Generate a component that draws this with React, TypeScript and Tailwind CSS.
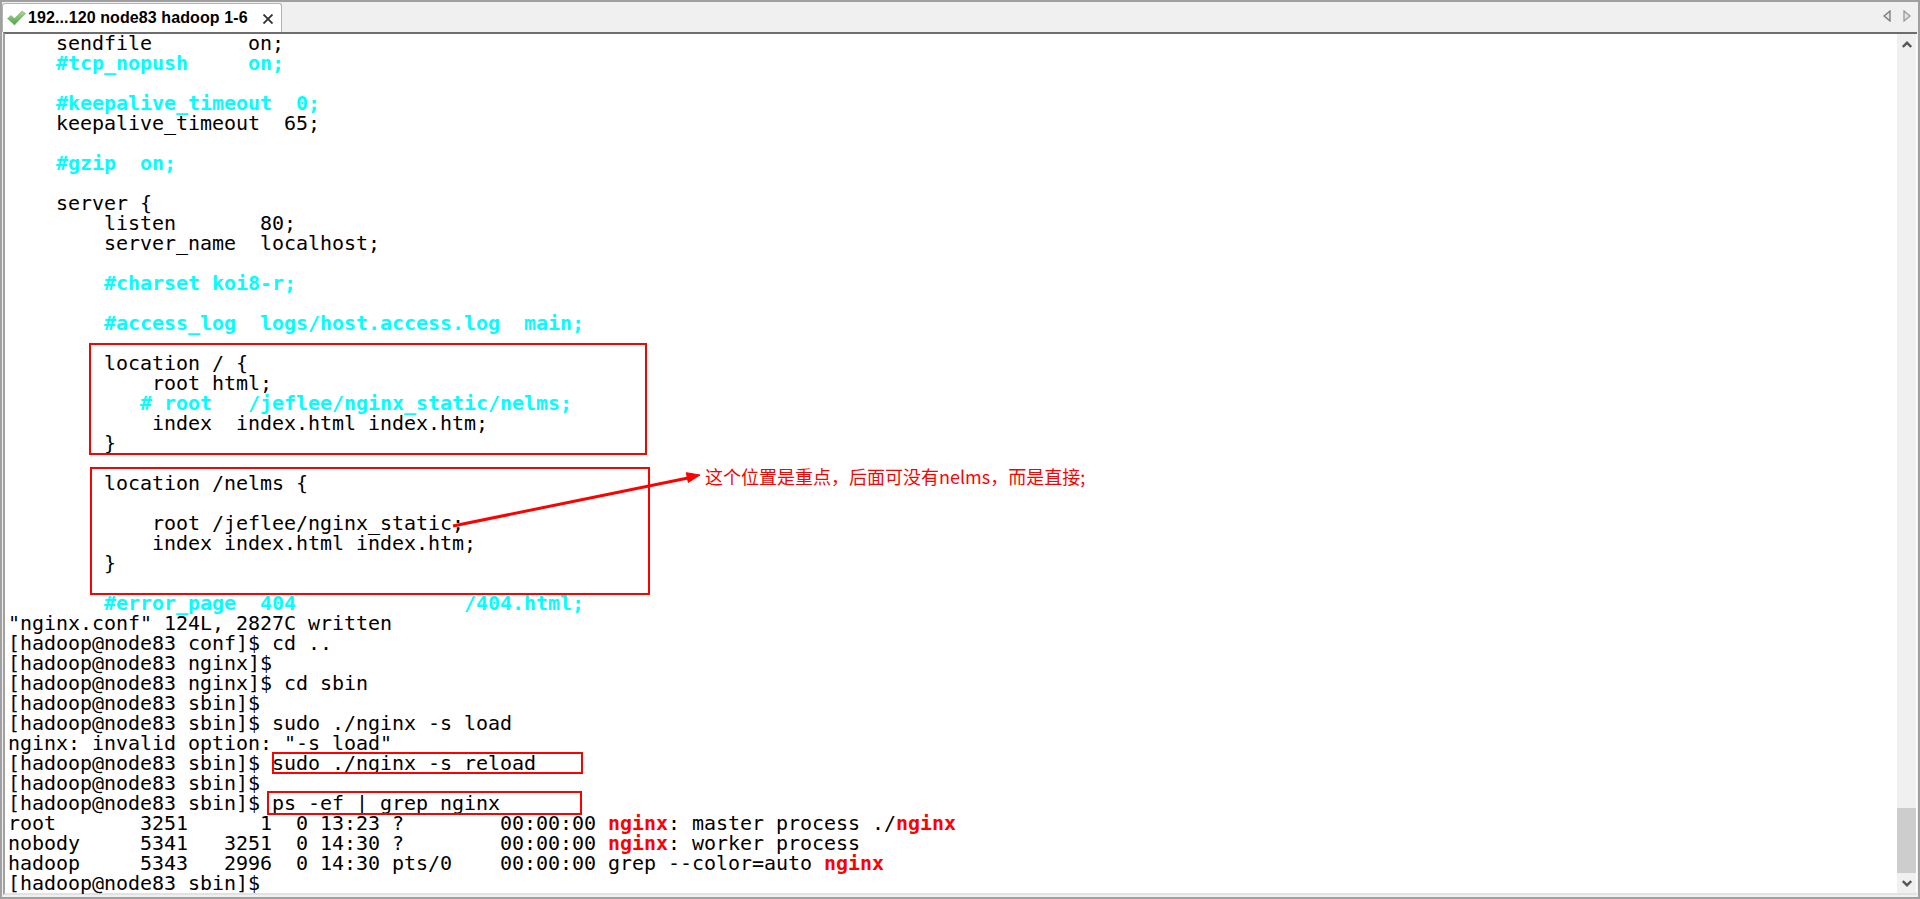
import React from 'react';

const mono = "font-['DejaVu_Sans_Mono',monospace]";

type Seg = { t: string; c?: 'cy' | 'rd' };

// one terminal row per entry, cyan = vim comment, red = grep match
const lines: (string | Seg[])[] = [
  '    sendfile        on;',
  [{ t: '    #tcp_nopush     on;', c: 'cy' }],
  '',
  [{ t: '    #keepalive_timeout  0;', c: 'cy' }],
  '    keepalive_timeout  65;',
  '',
  [{ t: '    #gzip  on;', c: 'cy' }],
  '',
  '    server {',
  '        listen       80;',
  '        server_name  localhost;',
  '',
  [{ t: '        #charset koi8-r;', c: 'cy' }],
  '',
  [{ t: '        #access_log  logs/host.access.log  main;', c: 'cy' }],
  '',
  '        location / {',
  '            root html;',
  [{ t: '           # root   /jeflee/nginx_static/nelms;', c: 'cy' }],
  '            index  index.html index.htm;',
  '        }',
  '',
  '        location /nelms {',
  '',
  '            root /jeflee/nginx_static;',
  '            index index.html index.htm;',
  '        }',
  '',
  [{ t: '        #error_page  404              /404.html;', c: 'cy' }],
  '"nginx.conf" 124L, 2827C written',
  '[hadoop@node83 conf]$ cd ..',
  '[hadoop@node83 nginx]$',
  '[hadoop@node83 nginx]$ cd sbin',
  '[hadoop@node83 sbin]$',
  '[hadoop@node83 sbin]$ sudo ./nginx -s load',
  'nginx: invalid option: "-s load"',
  '[hadoop@node83 sbin]$ sudo ./nginx -s reload',
  '[hadoop@node83 sbin]$',
  '[hadoop@node83 sbin]$ ps -ef | grep nginx',
  [
    { t: 'root       3251      1  0 13:23 ?        00:00:00 ' },
    { t: 'nginx', c: 'rd' },
    { t: ': master process ./' },
    { t: 'nginx', c: 'rd' },
  ],
  [
    { t: 'nobody     5341   3251  0 14:30 ?        00:00:00 ' },
    { t: 'nginx', c: 'rd' },
    { t: ': worker process' },
  ],
  [
    { t: 'hadoop     5343   2996  0 14:30 pts/0    00:00:00 grep --color=auto ' },
    { t: 'nginx', c: 'rd' },
  ],
  '[hadoop@node83 sbin]$',
];

const Row: React.FC<{ line: string | Seg[] }> = ({ line }) => {
  if (typeof line === 'string') return <div className="h-5">{line}</div>;
  return (
    <div className="h-5">
      {line.map((s, i) => (
        <span
          key={i}
          className={s.c === 'cy' ? 'font-bold text-[#00ffff]' : s.c === 'rd' ? 'font-bold text-[#ff0000]' : ''}
        >
          {s.t}
        </span>
      ))}
    </div>
  );
};

const Tab: React.FC = () => (
  <div className="mt-px flex h-[29px] w-[280px] items-center rounded-t-[3px] border border-b-0 border-[#b4b4b4] bg-white pl-[4px]">
    <svg width="19" height="16" viewBox="0 0 19 16">
      <defs>
        <linearGradient id="chk" x1="0" y1="0" x2="0" y2="1">
          <stop offset="0" stopColor="#a5e08a" />
          <stop offset="1" stopColor="#45a83c" />
        </linearGradient>
      </defs>
      <path d="M0.5 8.5 L4 5.5 L7.5 8.5 L15 1 L18.5 3.5 L7.5 15 Z" fill="url(#chk)" stroke="#9aa896" strokeWidth="0.7" />
    </svg>
    <span className="ml-[2px] whitespace-nowrap font-['Liberation_Sans',sans-serif] text-[16px] font-bold tracking-[0.1px] text-black">
      192...120 node83 hadoop 1-6
    </span>
    <svg className="ml-[15px] mt-px" width="10" height="10" viewBox="0 0 10 10">
      <path d="M0.5 0.5 L9.5 9.5 M9.5 0.5 L0.5 9.5" stroke="#303030" strokeWidth="1.8" />
    </svg>
  </div>
);

const RedBox: React.FC<{ cls: string }> = ({ cls }) => (
  <div className={`absolute border-2 border-[#ff0000] ${cls}`} />
);

const App: React.FC = () => {
  return (
    <div className="flex h-[899px] w-[1920px] flex-col overflow-hidden border-2 border-[#a0a0a0] bg-[#f0f0f0]">
      <div className="flex h-[30px] shrink-0 items-start justify-between">
        <Tab />
        <div className="mr-[7px] mt-[8px] flex gap-[12px]">
          <svg width="8" height="12" viewBox="0 0 8 12">
            <path d="M7 1 L1 6 L7 11 Z" fill="#e4e4e4" stroke="#7a7a7a" strokeWidth="1.3" />
          </svg>
          <svg width="8" height="12" viewBox="0 0 8 12">
            <path d="M1 1 L7 6 L1 11 Z" fill="#e4e4e4" stroke="#9a9a9a" strokeWidth="1.3" />
          </svg>
        </div>
      </div>
      <div className="mb-[2px] ml-px mr-[1px] flex min-h-0 flex-1 border-b-2 border-l-2 border-t-2 border-b-[#e2e2e2] border-l-[#a0a0a0] border-t-[#6e6e6e] bg-white">
        <div className={`relative min-w-0 flex-1 whitespace-pre pl-[3px] text-[20px] leading-5 tracking-[-0.04px] text-black ${mono}`}>
          <div className="-mt-px">
            {lines.map((l, i) => (
              <Row key={i} line={l} />
            ))}
          </div>
          <RedBox cls="left-[84px] top-[309px] h-[112px] w-[558px]" />
          <RedBox cls="left-[85px] top-[433px] h-[128px] w-[560px]" />
          <RedBox cls="left-[267px] top-[718px] h-[22px] w-[311px]" />
          <RedBox cls="left-[262px] top-[757px] h-[24px] w-[315px]" />
          <svg className="absolute left-[445px] top-[436px]" width="260" height="64" viewBox="0 0 260 64">
            <path d="M3 56 L238 8" stroke="#ff0000" strokeWidth="3" fill="none" />
            <path d="M250 5 L238.3 12.5 L236.3 2.7 Z" fill="#ff0000" stroke="#ff0000" strokeWidth="1" />
          </svg>
          <div className="absolute left-[700px] top-[430px] whitespace-nowrap font-['Noto_Sans_CJK_SC',sans-serif] text-[18px] leading-6 tracking-normal text-[#ff0000]">
            这个位置是重点，后面可没有nelms，而是直接;
          </div>
        </div>
        <div className="mr-px flex w-[19px] shrink-0 flex-col items-center bg-[#f0f0f0]">
          <svg className="mt-[7px]" width="10" height="7" viewBox="0 0 10 7">
            <path d="M0.8 6 L5 1.8 L9.2 6" stroke="#585858" strokeWidth="2.4" fill="none" />
          </svg>
          <div className="mt-auto h-[65px] w-full bg-[#cdcdcd]" />
          <svg className="mb-[6px] mt-[7px]" width="10" height="7" viewBox="0 0 10 7">
            <path d="M0.8 1 L5 5.2 L9.2 1" stroke="#585858" strokeWidth="2.4" fill="none" />
          </svg>
        </div>
      </div>
    </div>
  );
};

export default App;
